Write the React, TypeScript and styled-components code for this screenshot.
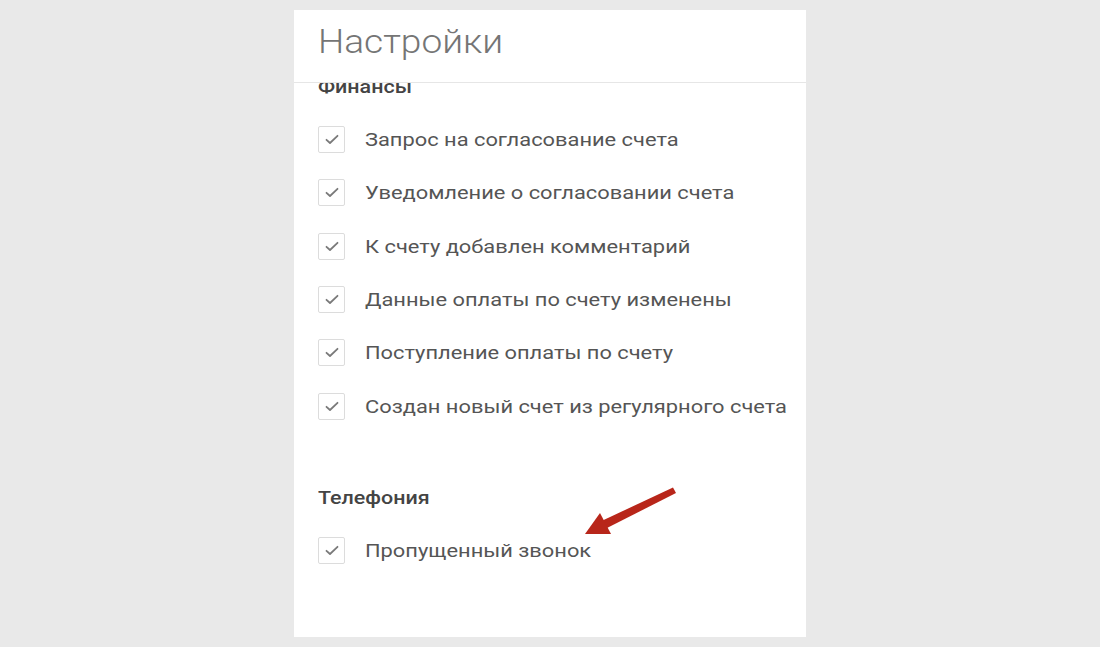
import React from 'react';
import styled, { createGlobalStyle } from 'styled-components';

const GlobalStyle = createGlobalStyle`
  html, body {
    margin: 0;
    padding: 0;
    background: #e9e9e9;
    font-family: Roboto, "Noto Sans", Arial, sans-serif;
  }
`;

const Page = styled.div`
  display: flex;
  justify-content: center;
  padding-top: 10px;
  height: 647px;
  box-sizing: border-box;
`;

const Panel = styled.div`
  position: relative;
  width: 512px;
  height: 627px;
  background: #ffffff;
  display: flex;
  flex-direction: column;
  overflow: hidden;
`;

const Header = styled.div`
  height: 72px;
  flex-shrink: 0;
  border-bottom: 1px solid #e6e6e6;
  padding-left: 24px;
  display: flex;
  align-items: center;
  box-sizing: content-box;
`;

// the screenshot is slightly wider than the font, so the text is stretched a bit
const Title = styled.h1`
  margin: 0;
  margin-top: -10px;
  font-size: 34px;
  font-weight: 300;
  color: #757575;
  transform: scaleX(1.09);
  transform-origin: left center;
`;

const Body = styled.div`
  flex: 1;
  overflow: hidden;
`;

const Content = styled.div`
  margin-top: -8px;
  padding-left: 24px;
`;

const Section = styled.section`
  & + & {
    margin-top: 53px;
  }
`;

const SectionTitle = styled.h2`
  margin: 0 0 14px;
  font-size: 19px;
  line-height: 24px;
  font-weight: 500;
  color: #444444;
  transform: scaleX(1.13);
  transform-origin: left center;
`;

const Row = styled.label`
  display: flex;
  align-items: center;
  height: 53.3px;
  gap: 20px;
  cursor: pointer;
`;

const Box = styled.span`
  width: 25px;
  height: 25px;
  border: 1px solid #dcdcdc;
  border-radius: 2px;
  display: flex;
  align-items: center;
  justify-content: center;
  flex-shrink: 0;
  background: #fff;
`;

const RowText = styled.span`
  font-size: 19px;
  color: #555555;
  transform: scaleX(1.15);
  transform-origin: left center;
  white-space: nowrap;
`;

const Arrow = styled.svg`
  position: absolute;
  left: 0;
  top: 0;
  pointer-events: none;
`;

const CheckMark = () => (
  <svg width="14" height="11" viewBox="0 0 14 11">
    <path d="M1.5 5.8 L5 9 L12.5 1.8" fill="none" stroke="#7a7a7a" strokeWidth="1.8" strokeLinecap="round" strokeLinejoin="round" />
  </svg>
);

const CheckRow: React.FC<{ label: string }> = ({ label }) => (
  <Row>
    <Box>
      <CheckMark />
    </Box>
    <RowText>{label}</RowText>
  </Row>
);

const finance = [
  'Запрос на согласование счета',
  'Уведомление о согласовании счета',
  'К счету добавлен комментарий',
  'Данные оплаты по счету изменены',
  'Поступление оплаты по счету',
  'Создан новый счет из регулярного счета',
];

export default function App() {
  return (
    <>
      <GlobalStyle />
      <Page>
        <Panel>
          <Header>
            <Title>Настройки</Title>
          </Header>
          <Body>
            <Content>
              <Section>
                <SectionTitle>Финансы</SectionTitle>
                {finance.map((f) => (
                  <CheckRow key={f} label={f} />
                ))}
              </Section>
              <Section>
                <SectionTitle>Телефония</SectionTitle>
                <CheckRow label="Пропущенный звонок" />
              </Section>
            </Content>
          </Body>
          <Arrow width="512" height="627" viewBox="0 0 512 627">
            <path d="M379 477.5 L382 483 L313 518 L307.5 511 Z" fill="#b8261a" />
            <path d="M291 524 L306 503 L317 524 Z" fill="#b8261a" />
          </Arrow>
        </Panel>
      </Page>
    </>
  );
}
